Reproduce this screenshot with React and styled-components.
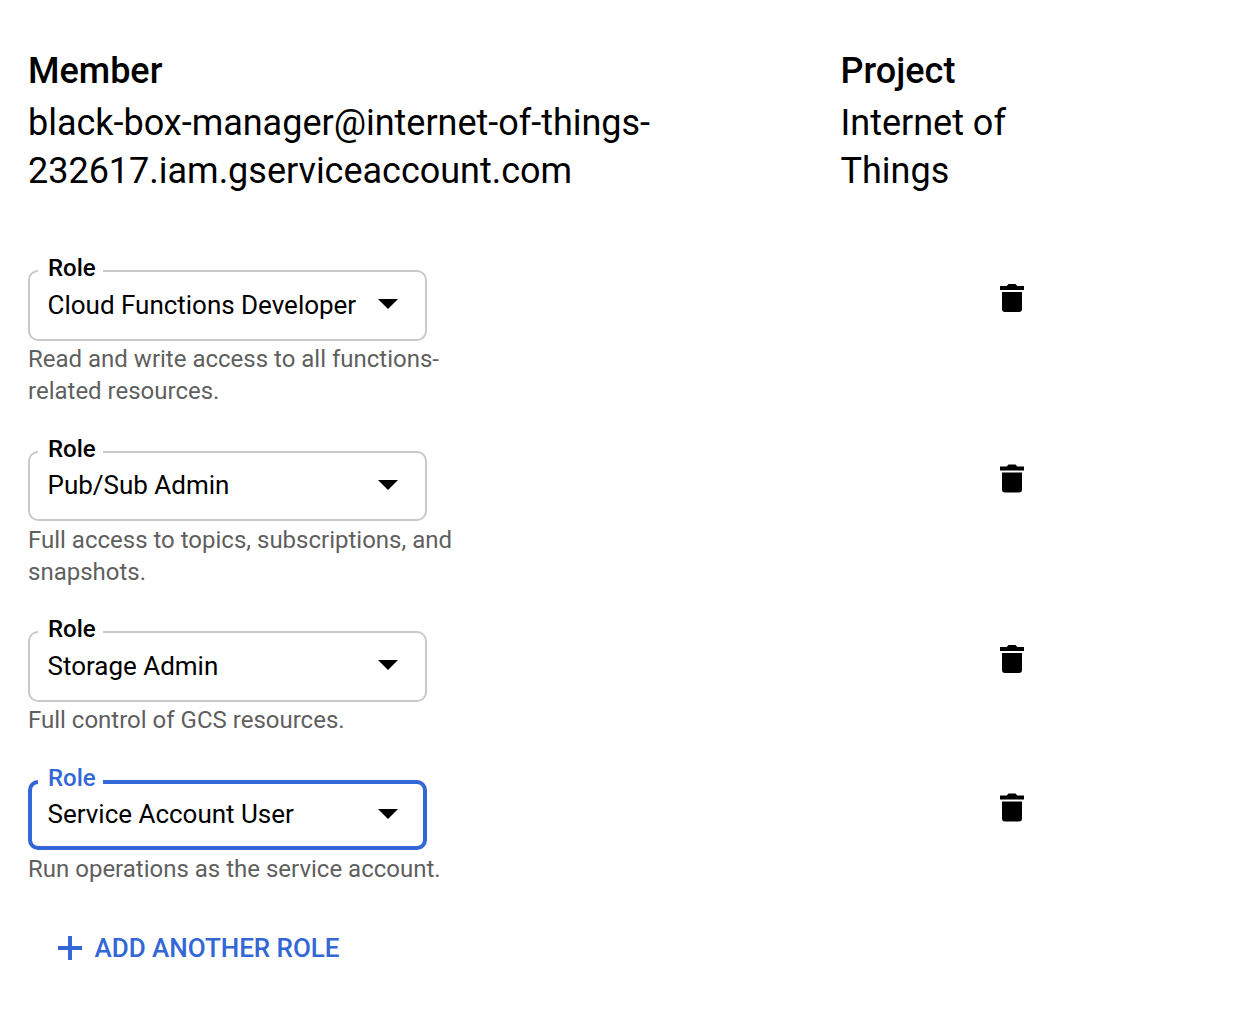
import React from "react";
import styled, { createGlobalStyle } from "styled-components";

const Global = createGlobalStyle`
  * { box-sizing: border-box; }
  body { margin: 0; background: #fff; color: #000; font-family: Roboto, "Liberation Sans", sans-serif; }
`;
const Page = styled.main`
  width: 1248px;
  height: 1016px;
  padding: 47px 28px 0;
  overflow: hidden;
`;
const Header = styled.header`
  display: grid;
  grid-template-columns: 812.6px 200px;
  height: 212px;
`;
const Heading = styled.h2`
  margin: 0 0 4px;
  font-size: 36px;
  line-height: 48px;
  font-weight: 500;
`;
const Value = styled.div`
  font-size: 36px;
  line-height: 48px;
  letter-spacing: -0.015px;
`;
const Roles = styled.div`
  display: flex;
  flex-direction: column;
`;
const Row = styled.section`
  display: grid;
  grid-template-columns: 972px 24px;
  height: ${(p) => p.$height}px;
`;
const Field = styled.fieldset`
  width: 399px;
  height: ${(p) => p.$height}px;
  min-width: 0;
  margin: 0;
  padding: 0 ${(p) => (p.$active ? 25.5 : 27.5)}px 0 ${(p) => (p.$active ? 15.6 : 17.6)}px;
  border: ${(p) => (p.$active ? "4px solid #3367d6" : "2px solid #c9c9c9")};
  border-radius: 10px;
`;
const Legend = styled.legend`
  margin-left: -9.6px;
  padding: 0 0 0 10px;
  width: 65px;
  height: 24px;
  font-size: 24px;
  line-height: ${(p) => (p.$active ? 16 : 18)}px;
  font-weight: 500;
  color: ${(p) => (p.$active ? "#3367d6" : "#000")};
`;
const Select = styled.div`
  display: flex;
  align-items: flex-start;
  justify-content: space-between;
  height: 44px;
  margin-top: ${(p) => (p.$active ? -1 : 0)}px;
`;
const Name = styled.span`
  margin-top: ${(p) => -p.$lift}px;
  font-size: 26px;
  line-height: 44px;
  letter-spacing: -0.02px;
  white-space: nowrap;
`;
const Arrow = styled.svg`
  display: block;
  width: 20px;
  height: 10px;
  margin-top: 16px;
`;
const Help = styled.p`
  margin: ${(p) => p.$gap}px 0 0;
  width: 440px;
  font-size: 24px;
  line-height: 32px;
  color: #5f5f5f;
  white-space: pre-line;
`;
const Trash = styled.svg`
  display: block;
  width: 24px;
  height: 29px;
  margin-top: ${(p) => p.$top}px;
`;
const Add = styled.button`
  display: flex;
  align-items: center;
  gap: 12.5px;
  height: 36px;
  margin: 0 0 0 30px;
  padding: 0;
  border: 0;
  background: transparent;
  color: #3367d6;
  font: 500 26px/36px Roboto, "Liberation Sans", sans-serif;
  letter-spacing: -0.03px;
`;
const roles = [
  { name: "Cloud Functions Developer", help: "Read and write access to all functions-\nrelated resources.", height: 181, field: 82, lift: 0, gap: 2, trash: 25 },
  { name: "Pub/Sub Admin", help: "Full access to topics, subscriptions, and\nsnapshots.", height: 180, field: 81, lift: 1, gap: 3, trash: 24.5 },
  { name: "Storage Admin", help: "Full control of GCS resources.", height: 150, field: 82, lift: 0, gap: 2, trash: 25 },
  { name: "Service Account User", help: "Run operations as the service account.", height: 160, field: 80, lift: 1, gap: 3, trash: 23.5, active: true },
];
export default function App() {
  return (
    <Page>
      <Global />
      <Header>
        <div>
          <Heading>Member</Heading>
          <Value>black-box-manager@internet-of-things-<br />232617.iam.gserviceaccount.com</Value>
        </div>
        <div>
          <Heading>Project</Heading>
          <Value>Internet of<br />Things</Value>
        </div>
      </Header>
      <Roles>
        {roles.map((r) => (
          <Row key={r.name} $height={r.height}>
            <div>
              <Field $active={r.active} $height={r.field}>
                <Legend $active={r.active}>Role</Legend>
                <Select $active={r.active}>
                  <Name $lift={r.lift}>{r.name}</Name>
                  <Arrow viewBox="0 0 20 10"><path d="M0 0h20L10 10z" /></Arrow>
                </Select>
              </Field>
              <Help $gap={r.gap}>{r.help}</Help>
            </div>
            <Trash $top={Math.floor(r.trash)} viewBox="0 0 24 29" aria-label="Delete role">
              <path
                transform={`translate(0 ${r.trash % 1})`}
                d="M0 2h6.7L8.5 0h7l1.8 2H24v4H0zM2 8h20v17a3 3 0 0 1-3 3H5a3 3 0 0 1-3-3z"
              />
            </Trash>
          </Row>
        ))}
      </Roles>
      <Add>
        <svg width="24" height="24" viewBox="0 0 24 24"><path d="M12 0v24M0 12h24" stroke="currentColor" strokeWidth="4" /></svg>
        ADD ANOTHER ROLE
      </Add>
    </Page>
  );
}
